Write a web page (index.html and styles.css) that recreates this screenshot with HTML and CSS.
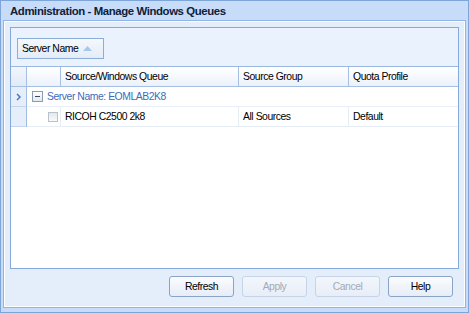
FILE: index.html
```html
<!DOCTYPE html>
<html lang="en">
<head>
    <meta charset="UTF-8">
    <title>Administration - Manage Windows Queues</title>
    <link rel="stylesheet" href="styles.css">
</head>
<body>
    <div class="window">
        <div class="titlebar">Administration - Manage Windows Queues</div>
        <div class="frame">
            <div class="panel">
                <div class="groupbar">
                    <div class="groupchip">
                        Server Name
                        <svg class="sortarrow" width="9" height="5" viewBox="0 0 9 5"><polygon points="0,5 4.5,0 9,5" fill="#a9c6ec"/></svg>
                    </div>
                </div>
                <div class="grid">
                    <div class="row header">
                        <div class="cell ind"></div>
                        <div class="cell exp"></div>
                        <div class="cell c1">Source/Windows Queue</div>
                        <div class="cell c2">Source Group</div>
                        <div class="cell c3">Quota Profile</div>
                    </div>
                    <div class="row grouprow">
                        <div class="cell ind">
                            <svg width="6" height="8" viewBox="0 0 6 8"><polyline points="1,1 4,4 1,7" fill="none" stroke="#4a7cc4" stroke-width="1.5"/></svg>
                        </div>
                        <div class="cell grouptitle">
                            <span class="minus"></span>
                            Server Name: EOMLAB2K8
                        </div>
                    </div>
                    <div class="row datarow">
                        <div class="cell ind"></div>
                        <div class="cell exp"><span class="check"></span></div>
                        <div class="cell c1">RICOH C2500 2k8</div>
                        <div class="cell c2">All Sources</div>
                        <div class="cell c3">Default</div>
                    </div>
                </div>
            </div>
            <div class="buttons">
                <button class="btn">Refresh</button>
                <button class="btn" disabled>Apply</button>
                <button class="btn" disabled>Cancel</button>
                <button class="btn">Help</button>
            </div>
        </div>
    </div>
</body>
</html>
```
FILE: styles.css
```css
* {
    box-sizing: border-box;
}
body {
    margin: 0;
    padding: 0;
    font-family: "Liberation Sans", Arial, sans-serif;
    font-size: 10.4px;
    letter-spacing: -0.45px;
    color: #000;
}
.window {
    width: 469px;
    height: 313px;
    border: 1px solid #7ea5d8;
    background-color: #c6dcf8;
    display: flex;
    flex-direction: column;
}
.titlebar {
    height: 19px;
    line-height: 20px;
    padding-left: 9px;
    font-weight: bold;
    font-size: 11.4px;
    letter-spacing: -0.4px;
    color: #10203a;
}
.frame {
    flex: 1;
    margin: 0 2px 4px 2px;
    border: 1px solid #90b4e4;
    box-shadow: inset 1px 1px 0 #ffffff, inset -1px -1px 0 #ffffff;
    background-color: #e4edfa;
    padding: 6px 6px 0 6px;
    display: flex;
    flex-direction: column;
}
.panel {
    height: 242px;
    border: 1px solid #86a9dc;
    background-color: #ffffff;
    display: flex;
    flex-direction: column;
}
.groupbar {
    height: 39px;
    background-color: #eaf2fd;
    padding: 10px 0 0 6px;
    border-bottom: 1px solid #9ab8e0;
}
.groupchip {
    width: 87px;
    height: 21px;
    border: 1px solid #8badd8;
    background: linear-gradient(#f5f8fd, #e3ecf8);
    padding-left: 4px;
    line-height: 19px;
    display: flex;
    align-items: center;
    gap: 5px;
}
.grid {
    flex: 1;
    display: flex;
    flex-direction: column;
}
.row {
    display: flex;
    height: 20px;
}
.cell {
    line-height: 19px;
    padding-left: 4px;
    white-space: nowrap;
    border-right: 1px solid #e6edf7;
    border-bottom: 1px solid #e6edf7;
}
.ind {
    width: 16px;
    padding-left: 0;
    background-color: #e6eefa;
    border-right: 1px solid #9fbbe0;
    border-bottom: 1px solid #c3d5ee;
    display: flex;
    align-items: center;
    justify-content: center;
}
.exp {
    width: 34px;
}
.c1 {
    width: 178px;
}
.c2 {
    width: 110px;
}
.c3 {
    flex: 1;
    border-right: none;
}
.header {
    height: 20px;
    background: linear-gradient(#ffffff, #eaf1fb);
}
.header .cell {
    border-right: 1px solid #a5c0e2;
    border-bottom: 1px solid #a5c0e2;
    line-height: 20px;
}
.header .ind {
    background: linear-gradient(#f2f6fc, #e1eaf8);
}
.header .c3 {
    border-right: none;
}
.grouprow .grouptitle {
    flex: 1;
    color: #3d6cb9;
    padding-left: 5px;
    display: flex;
    align-items: center;
    gap: 4px;
    border-right: none;
    border-bottom: 1px solid #e9eff8;
}
.minus {
    width: 11px;
    height: 11px;
    border: 1px solid #8a9cb2;
    background: linear-gradient(#ffffff, #e2e8f0);
    position: relative;
}
.minus::after {
    content: "";
    position: absolute;
    left: 2px;
    top: 4px;
    width: 5px;
    height: 1px;
    background-color: #3a4a60;
}
.datarow .exp {
    padding-left: 21px;
    display: flex;
    align-items: center;
}
.check {
    width: 10px;
    height: 10px;
    border: 1px solid #b8c2cc;
    background: linear-gradient(#e4e8ec, #f8f9fa);
}
.buttons {
    display: flex;
    justify-content: flex-end;
    gap: 8px;
    padding: 7px 6px 0 0;
}
.btn {
    width: 65px;
    height: 21px;
    font-family: "Liberation Sans", Arial, sans-serif;
    font-size: 10.4px;
    letter-spacing: -0.45px;
    color: #000;
    border: 1px solid #8aa4c6;
    border-radius: 3px;
    background: linear-gradient(#fbfcfe, #e6edf7);
    padding: 0;
}
.btn:disabled {
    color: #a3aab4;
    border-color: #c7d4e6;
    background: linear-gradient(#f2f6fc, #e8eef8);
}
```
